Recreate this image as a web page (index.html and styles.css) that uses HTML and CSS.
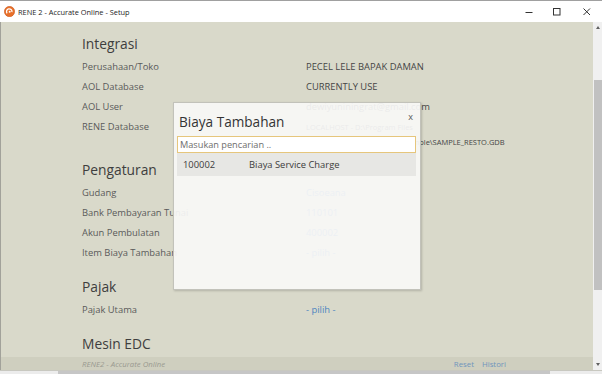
FILE: index.html
```html
<!DOCTYPE html>
<html>
<head>
<meta charset="utf-8">
<title>RENE 2 - Accurate Online - Setup</title>
<link rel="stylesheet" href="styles.css">
</head>
<body>
<div class="window">
  <div class="titlebar">
    <svg class="app-icon" viewBox="0 0 12 12" width="11" height="11">
      <circle cx="6" cy="6" r="5.6" fill="#e8702a"/>
      <circle cx="6" cy="6" r="5.6" fill="none" stroke="#c9541c" stroke-width="0.6"/>
      <path d="M3.4 8 A3 3 0 1 1 8.7 6.6" fill="none" stroke="#fff" stroke-width="1.4"/>
      <circle cx="6.2" cy="6.3" r="1.1" fill="#fff"/>
    </svg>
    <span class="title">RENE 2 - Accurate Online - Setup</span>
    <div class="controls">
      <div class="ctl"><svg width="8" height="8" viewBox="0 0 8 8"><path d="M0.5 4.5 H7.5" stroke="#333" stroke-width="1"/></svg></div>
      <div class="ctl"><svg width="8" height="8" viewBox="0 0 8 8"><rect x="0.5" y="0.5" width="6.5" height="6.5" fill="none" stroke="#333" stroke-width="1"/></svg></div>
      <div class="ctl ctl-close"><svg width="8" height="8" viewBox="0 0 8 8"><path d="M0.5 0.5 L7 7 M7 0.5 L0.5 7" stroke="#333" stroke-width="1"/></svg></div>
    </div>
  </div>

  <div class="main">
    <div class="client">
      <div class="scroller">
        <section class="section">
          <h2>Integrasi</h2>
          <div class="rows">
            <div class="lbl">Perusahaan/Toko</div><div class="val">PECEL LELE BAPAK DAMAN</div>
            <div class="lbl">AOL Database</div><div class="val">CURRENTLY USE</div>
            <div class="lbl">AOL User</div><div class="val">dewiyuniningrat@gmail.com</div>
            <div class="lbl">RENE Database</div><div class="val path">LOCALHOST - D:\Program Files<br>(x86)\Accurate\RENE2\Data\Sample\SAMPLE_RESTO.GDB</div>
          </div>
        </section>
        <section class="section">
          <h2>Pengaturan</h2>
          <div class="rows">
            <div class="lbl">Gudang</div><div class="link">Cisoeana</div>
            <div class="lbl">Bank Pembayaran Tunai</div><div class="link">110101</div>
            <div class="lbl">Akun Pembulatan</div><div class="link">400002</div>
            <div class="lbl">Item Biaya Tambahan</div><div class="link">- pilih -</div>
          </div>
        </section>
        <section class="section">
          <h2>Pajak</h2>
          <div class="rows">
            <div class="lbl">Pajak Utama</div><div class="link">- pilih -</div>
          </div>
        </section>
        <section class="section">
          <h2>Mesin EDC</h2>
        </section>
      </div>
      <div class="footer">
        <span class="brand">RENE2 - Accurate Online</span>
        <span class="links"><span class="flink">Reset</span><span class="flink">Histori</span></span>
      </div>
    </div>
    <div class="vscroll">
      <div class="arrow up"></div>
      <div class="thumb"></div>
      <div class="spacer"></div>
      <div class="arrow down"></div>
    </div>
  </div>
  <div class="hscroll"><div class="hthumb"></div></div>
</div>

<div class="modal">
  <div class="modal-head">
    <span class="modal-title">Biaya Tambahan</span>
    <span class="modal-close">x</span>
  </div>
  <div class="search">Masukan pencarian ..</div>
  <div class="result">
    <span>100002</span><span>Biaya Service Charge</span>
  </div>
</div>
</body>
</html>
```

FILE: styles.css
```css
* { box-sizing: border-box; margin: 0; padding: 0; }
html, body { width: 602px; height: 374px; overflow: hidden; }
body {
  font-family: "Open Sans", "Noto Sans", sans-serif;
  background: #fff;
  position: relative;
}
.window { display: flex; flex-direction: column; height: 374px; }

.titlebar {
  flex: none;
  height: 22px;
  background: #fff;
  border-top: 1px solid #a0a0a0;
  display: flex;
  align-items: center;
  padding-left: 4px;
}
.app-icon { margin-right: 3px; flex: none; }
.title { font-size: 7.4px; color: #1e1e1e; white-space: nowrap; }
.controls { margin-left: auto; display: flex; height: 100%; }
.ctl { width: 28px; display: flex; align-items: center; justify-content: center; }
.ctl-close { width: 31px; }

.main { flex: 1; display: flex; min-height: 0; border-left: 1px solid #a2a29a; }
.client { flex: 1; min-width: 0; display: flex; flex-direction: column; background: #d9d9ca; }
.scroller { flex: 1; overflow: hidden; padding: 9px 0 0 81px; }

.section + .section { margin-top: 11px; }
.section h2 {
  font-size: 13.8px;
  font-weight: 400;
  line-height: 26px;
  color: #3e3e3e;
  white-space: nowrap;
}
.rows { display: grid; grid-template-columns: 224px 1fr; }
.rows > div { font-size: 9.4px; line-height: 20px; white-space: nowrap; }
.lbl { color: #5a5a5a; }
.val { color: #454545; }
.link { color: #4f86c0; }
.rows > .path { font-size: 7.5px; line-height: 15px; padding-top: 3px; margin-bottom: -4px; }

.footer {
  flex: none;
  height: 13px;
  background: #cfcfbf;
  display: flex;
  align-items: center;
  justify-content: space-between;
  padding: 0 87px 0 81px;
  font-size: 7.8px;
}
.brand { color: #9a9a90; font-style: italic; }
.links { display: flex; gap: 8px; }
.flink { color: #6f95bd; }

.vscroll {
  flex: none;
  width: 9px;
  background: #f0f0f0;
  display: flex;
  flex-direction: column;
  align-items: center;
}
.arrow { flex: none; width: 0; height: 0; border-left: 2.5px solid transparent; border-right: 2.5px solid transparent; }
.arrow.up { border-bottom: 3px solid #606060; margin-top: 4px; }
.arrow.down { border-top: 3px solid #606060; margin-bottom: 4px; }
.thumb { flex: none; width: 8px; height: 210px; margin-top: 51px; margin-left: 1px; background: #c1c1c1; }
.spacer { flex: 1; }

.hscroll { flex: none; height: 4px; background: #ececec; border-top: 1px solid #c8c8c0; padding-left: 58px; }
.hthumb { width: 492px; height: 3px; background: #c6c6c6; }

.modal {
  position: absolute;
  left: 173px;
  top: 102px;
  width: 248px;
  height: 188px;
  background: rgba(248, 248, 246, 0.93);
  border: 1px solid #c2c2ba;
  box-shadow: 1px 1px 2px rgba(0, 0, 0, 0.18);
  padding: 7px 4px 0 3px;
}
.modal-head { display: flex; justify-content: space-between; align-items: flex-start; }
.modal-title { font-size: 13.6px; line-height: 24px; color: #333; padding-left: 2px; white-space: nowrap; }
.modal-close { font-size: 9px; line-height: 12px; color: #555; padding-right: 3px; margin-top: 1px; }
.search {
  margin-top: 2px;
  height: 17px;
  background: #fff;
  border: 1px solid #e6c67c;
  font-size: 9.2px;
  line-height: 15px;
  padding-left: 2px;
  color: #6e6e6e;
  white-space: nowrap;
}
.result {
  height: 23px;
  background: #e7e7e4;
  display: grid;
  grid-template-columns: 66px 1fr;
  align-items: center;
  padding-left: 6px;
  font-size: 9.4px;
  color: #3c3c3c;
  white-space: nowrap;
}
```
